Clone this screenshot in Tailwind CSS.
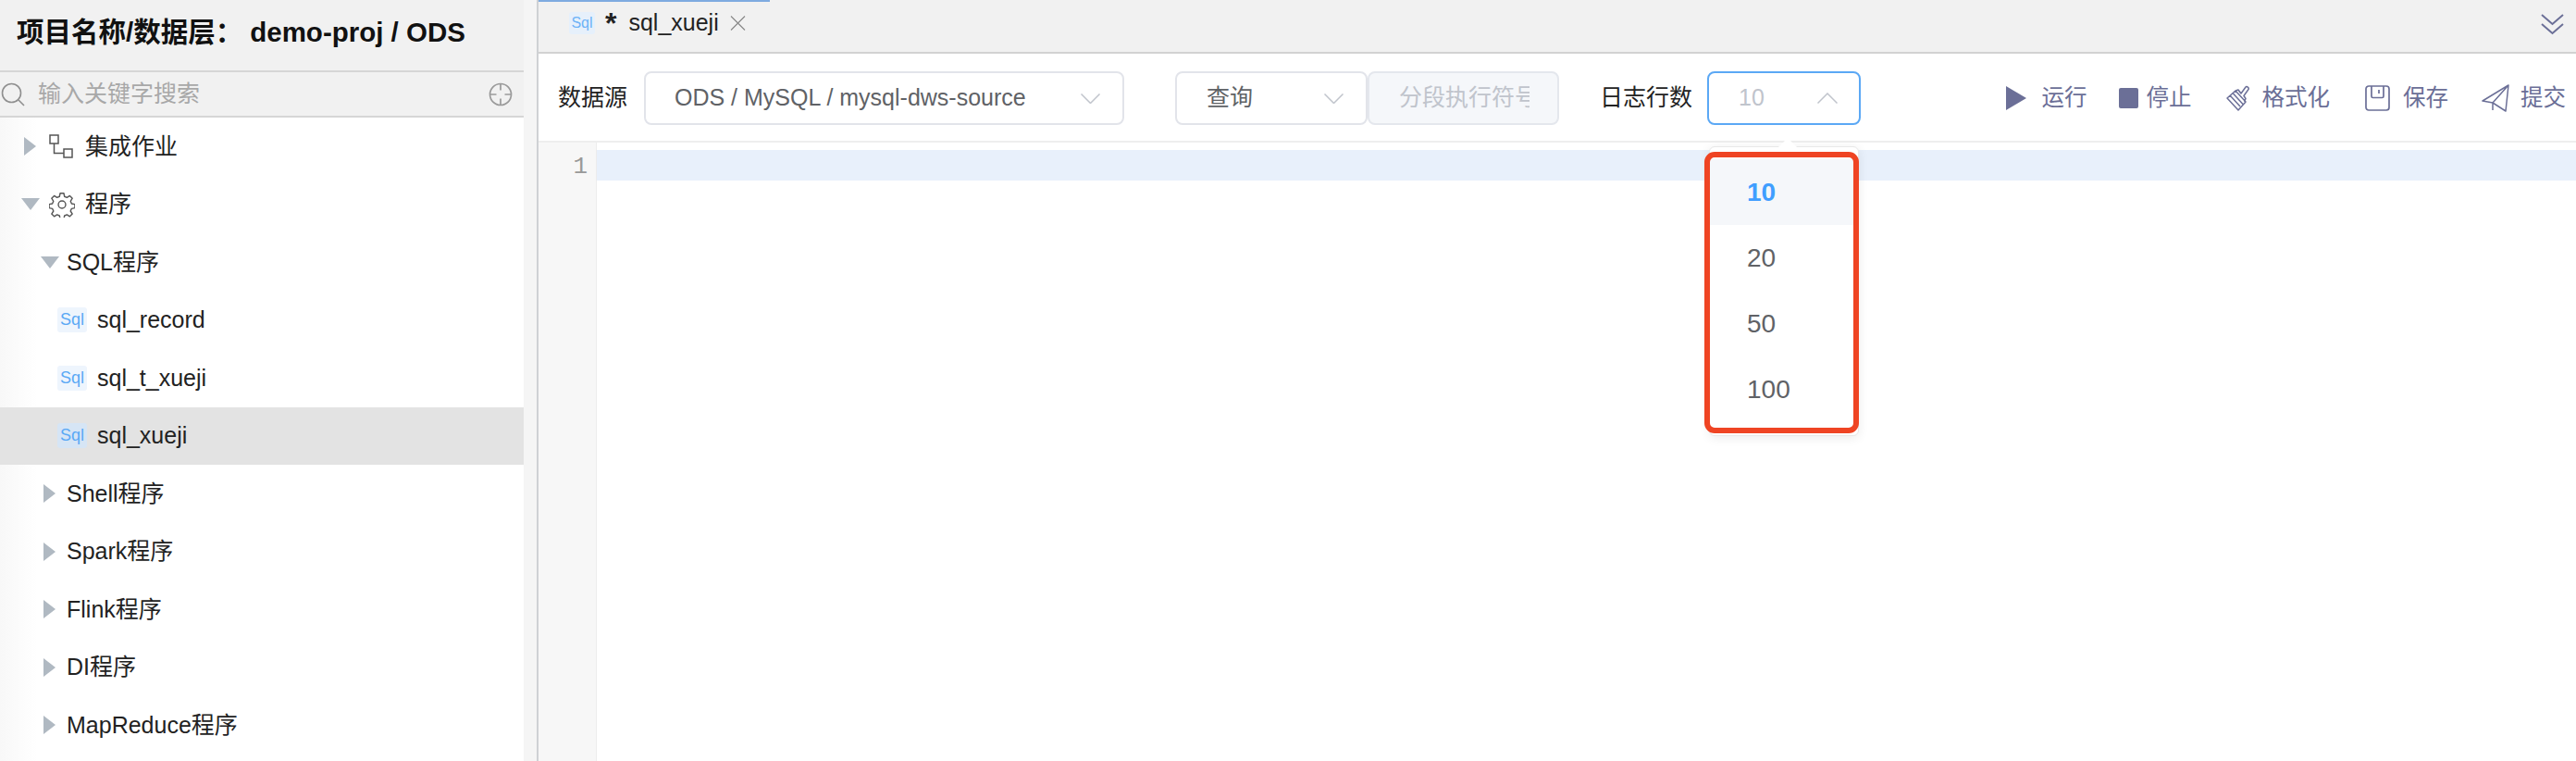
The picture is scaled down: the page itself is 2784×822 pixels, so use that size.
<!DOCTYPE html>
<html lang="zh">
<head>
<meta charset="utf-8">
<title>sql_xueji</title>
<script src="https://cdn.jsdelivr.net/npm/@tailwindcss/browser@4"></script>
</head>
<body class="m-0 bg-white">
<div class="flex h-[822px] w-[2784px] overflow-hidden bg-white font-['Liberation_Sans','Noto_Sans_CJK_SC',sans-serif] text-[25px] text-[#222]">

  <!-- Sidebar -->
  <aside class="flex h-full w-[566px] shrink-0 flex-col bg-white">
    <div class="flex h-[78px] shrink-0 items-center border-b-2 border-[#d6d6d6] bg-[#f1f1f1] pb-[6px] pl-[18px] text-[29.5px] font-bold text-[#111]">
      <span>项目名称/数据层：</span><span class="ml-[8px]">demo-proj / ODS</span>
    </div>
    <div class="flex h-[49px] shrink-0 items-center border-b-2 border-[#d6d6d6] bg-[#f1f1f1] pr-[12px] pl-[1px] text-[#a8a8a8]">
      <svg class="h-[26px] w-[26px] shrink-0" viewBox="0 0 26 26" fill="none" stroke="#8f8f8f" stroke-width="1.6"><circle cx="11.5" cy="11.5" r="10"/><path d="M19 19l6 6"/></svg>
      <span class="ml-[14px]">输入关键字搜索</span>
      <svg class="ml-auto h-[26px] w-[26px] shrink-0" viewBox="0 0 26 26" fill="none" stroke="#9a9a9a" stroke-width="1.7"><circle cx="13" cy="13" r="11.5"/><path d="M13 1.5v7M13 17.5v7M1.5 13h7M17.5 13h7"/></svg>
    </div>
    <nav class="flex flex-1 flex-col bg-linear-to-r from-[#f8f8f8] to-white to-[40px]">
      <div class="flex h-[62.5px] items-center pl-[26px]">
        <svg class="h-[20px] w-[13px] shrink-0" viewBox="0 0 13 20"><path d="M0 0l13 10L0 20z" fill="#b0b9c2"/></svg>
        <svg class="ml-[14px] h-[26px] w-[26px] shrink-0" viewBox="0 0 26 26" fill="none" stroke="#555" stroke-width="1.5"><rect x="1" y="1" width="9" height="9"/><rect x="16" y="16" width="9" height="9"/><path d="M5.5 10v10.5H16"/></svg>
        <span class="ml-[13px]">集成作业</span>
      </div>
      <div class="flex h-[62.5px] items-center pl-[23px]">
        <svg class="h-[13px] w-[20px] shrink-0" viewBox="0 0 20 13"><path d="M0 0h20L10 13z" fill="#b0b9c2"/></svg>
        <svg class="ml-[10px] h-[28px] w-[28px] shrink-0" viewBox="0 0 24 24" fill="none" stroke="#555" stroke-width="1.2" stroke-linejoin="round"><circle cx="12" cy="12" r="3.4"/><path d="M10.3 1.5h3.4l.6 3 2.3 1 2.6-1.7 2.4 2.4-1.7 2.6 1 2.3 3 .6v3.4l-3 .6-1 2.3 1.7 2.6-2.4 2.4-2.6-1.7-2.3 1-.6 3h-3.4l-.6-3-2.3-1-2.6 1.7-2.4-2.4 1.7-2.6-1-2.3-3-.6v-3.400l3-.6 1-2.3-1.7-2.6 2.4-2.4 2.6 1.7 2.3-1z"/></svg>
        <span class="ml-[11px]">程序</span>
      </div>
      <div class="flex h-[62.5px] items-center pl-[44px]">
        <svg class="h-[13px] w-[20px] shrink-0" viewBox="0 0 20 13"><path d="M0 0h20L10 13z" fill="#b0b9c2"/></svg>
        <span class="ml-[8px]">SQL程序</span>
      </div>
      <div class="flex h-[62.5px] items-center pl-[62px]">
        <span class="flex h-[27px] w-[32px] shrink-0 items-center justify-center rounded-[3px] bg-[#eef5fd] text-[18px] text-[#5aa9f5]">Sql</span>
        <span class="ml-[11px]">sql_record</span>
      </div>
      <div class="flex h-[62.5px] items-center pl-[62px]">
        <span class="flex h-[27px] w-[32px] shrink-0 items-center justify-center rounded-[3px] bg-[#eef5fd] text-[18px] text-[#5aa9f5]">Sql</span>
        <span class="ml-[11px]">sql_t_xueji</span>
      </div>
      <div class="flex h-[62.5px] items-center bg-[#e3e3e3] pl-[62px]">
        <span class="flex h-[27px] w-[32px] shrink-0 items-center justify-center rounded-[3px] bg-[#d6e5f5] text-[18px] text-[#5aa9f5]">Sql</span>
        <span class="ml-[11px]">sql_xueji</span>
      </div>
      <div class="flex h-[62.5px] items-center pl-[47px]">
        <svg class="h-[20px] w-[13px] shrink-0" viewBox="0 0 13 20"><path d="M0 0l13 10L0 20z" fill="#b0b9c2"/></svg>
        <span class="ml-[12px]">Shell程序</span>
      </div>
      <div class="flex h-[62.5px] items-center pl-[47px]">
        <svg class="h-[20px] w-[13px] shrink-0" viewBox="0 0 13 20"><path d="M0 0l13 10L0 20z" fill="#b0b9c2"/></svg>
        <span class="ml-[12px]">Spark程序</span>
      </div>
      <div class="flex h-[62.5px] items-center pl-[47px]">
        <svg class="h-[20px] w-[13px] shrink-0" viewBox="0 0 13 20"><path d="M0 0l13 10L0 20z" fill="#b0b9c2"/></svg>
        <span class="ml-[12px]">Flink程序</span>
      </div>
      <div class="flex h-[62.5px] items-center pl-[47px]">
        <svg class="h-[20px] w-[13px] shrink-0" viewBox="0 0 13 20"><path d="M0 0l13 10L0 20z" fill="#b0b9c2"/></svg>
        <span class="ml-[12px]">DI程序</span>
      </div>
      <div class="flex h-[62.5px] items-center pl-[47px]">
        <svg class="h-[20px] w-[13px] shrink-0" viewBox="0 0 13 20"><path d="M0 0l13 10L0 20z" fill="#b0b9c2"/></svg>
        <span class="ml-[12px]">MapReduce程序</span>
      </div>
    </nav>
  </aside>

  <!-- Splitter -->
  <div class="h-full w-[16px] shrink-0 border-r-2 border-[#cfd1d4] bg-[#f5f5f5]"></div>

  <!-- Main -->
  <main class="flex h-full min-w-0 flex-1 flex-col">
    <!-- Tabs -->
    <div class="flex h-[58px] shrink-0 items-start border-b-2 border-[#d2d2d2] bg-[#f1f1f1]">
      <div class="flex h-[56px] w-[250px] items-center border-t-2 border-[#7fabe0] pb-[8px] pl-[33px]">
        <span class="flex h-[24px] w-[28px] shrink-0 items-center justify-center rounded-[3px] bg-[#e6f0fb] text-[16px] text-[#6db3f7]">Sql</span>
        <span class="ml-[11px] text-[32px] leading-none font-bold">*</span>
        <span class="ml-[13px]">sql_xueji</span>
        <svg class="ml-[12px] h-[16px] w-[17px] shrink-0" viewBox="0 0 17 16" fill="none" stroke="#8a8a8a" stroke-width="1.2"><path d="M1 0.5l15 15M16 0.5l-15 15"/></svg>
      </div>
      <svg class="mt-[15px] mr-[13px] ml-auto h-[23px] w-[25px] shrink-0" viewBox="0 0 25 23" fill="none" stroke="#6b6f97" stroke-width="2"><path d="M1 1l11.500 10L24 1M1 11l11.500 10L24 11"/></svg>
    </div>

    <!-- Toolbar -->
    <div class="flex h-[96px] shrink-0 items-center border-b-2 border-[#eeeeee] pt-[2px] pl-[21px]">
      <span class="w-[75px] shrink-0 whitespace-nowrap">数据源</span>
      <div class="ml-[18px] flex h-[58px] w-[519px] shrink-0 items-center rounded-[8px] border-2 border-[#e2e4ea] pr-[24px] pl-[31px] text-[#606266]">
        <span>ODS / MySQL / mysql-dws-source</span>
        <svg class="ml-auto h-[11px] w-[21px] shrink-0" viewBox="0 0 21 11" fill="none" stroke="#c0c4cc" stroke-width="1.500"><path d="M0.500 0.500l10 10 10-10"/></svg>
      </div>
      <div class="ml-[55px] flex h-[58px] w-[208px] shrink-0 items-center rounded-[8px] border-2 border-[#e2e4ea] pr-[24px] pl-[32px] text-[#606266]">
        <span>查询</span>
        <svg class="ml-auto h-[11px] w-[21px] shrink-0" viewBox="0 0 21 11" fill="none" stroke="#c0c4cc" stroke-width="1.500"><path d="M0.500 0.500l10 10 10-10"/></svg>
      </div>
      <div class="flex h-[58px] w-[207px] shrink-0 items-center overflow-hidden rounded-[8px] border-2 border-[#e4e7ed] bg-[#f5f7fa] pl-[32px] text-[#c0c4cc]">
        <span class="w-[141px] shrink-0 overflow-hidden whitespace-nowrap">分段执行符号</span>
      </div>
      <span class="ml-[44px] w-[98px] shrink-0 whitespace-nowrap">日志行数</span>
      <div class="relative ml-[18px] flex h-[58px] w-[166px] shrink-0 items-center rounded-[8px] border-2 border-[#5ba8f5] pr-[23px] pl-[32px] text-[#c0c4cc]">
        <span>10</span>
        <svg class="ml-auto h-[12px] w-[22px] shrink-0" viewBox="0 0 22 12" fill="none" stroke="#c0c4cc" stroke-width="1.500"><path d="M0.500 11.500l10.500-10.500 10.500 10.500"/></svg>

        <!-- Dropdown -->
        <div class="absolute top-[79px] left-0 z-10 w-[162px]">
          <div class="rounded-[6px] border border-[#e8e8e8] bg-white pt-[13px] pb-[14px] text-[28px] text-[#606266] shadow-[0_2px_12px_rgba(0,0,0,0.08)]">
            <div class="flex h-[71px] items-center bg-[#f5f7fa] pl-[40px] font-bold text-[#409eff]">10</div>
            <div class="flex h-[71px] items-center pl-[40px]">20</div>
            <div class="flex h-[71px] items-center pl-[40px]">50</div>
            <div class="flex h-[71px] items-center pl-[40px]">100</div>
          </div>
          <div class="absolute -top-[9px] left-[74px] h-0 w-0 border-x-[11px] border-b-[11px] border-x-transparent border-b-white"></div>
          <div class="absolute top-[6px] -left-[5px] h-[304px] w-[167px] rounded-[11px] border-[6px] border-[#ef4423]"></div>
        </div>
      </div>

      <div class="mr-[11px] ml-auto flex shrink-0 items-center text-[24.5px] whitespace-nowrap text-[#6b6f97]">
        <svg class="h-[26px] w-[22px] shrink-0" viewBox="0 0 22 26"><path d="M0 0l22 13L0 26z" fill="#6b6f97"/></svg>
        <span class="ml-[17px]">运行</span>
        <span class="ml-[34px] h-[22px] w-[21px] shrink-0 rounded-[2px] bg-[#6b6f97]"></span>
        <span class="ml-[9px]">停止</span>
        <svg class="ml-[37px] h-[28px] w-[27px] shrink-0" viewBox="0 0 27 28" fill="none" stroke="#6b6f97" stroke-width="1.500" stroke-linejoin="round"><path d="M1 14l9-8 11 12-8 9zM4 11l11 12M7 8.500l11 12M10 6l3-1 3 4 5-7c1-1.500 4 1 3 2.500l-5 7 2 3-1.500 3.500"/></svg>
        <span class="ml-[12px]">格式化</span>
        <svg class="ml-[38px] h-[28px] w-[27px] shrink-0" viewBox="0 0 27 28" fill="none" stroke="#6b6f97" stroke-width="1.700"><rect x="1" y="1" width="25" height="26" rx="3"/><path d="M7 1v11c0 1 .5 1.500 1.500 1.500h10c1 0 1.500-.5 1.500-1.500V1M15 5v4"/></svg>
        <span class="ml-[14px]">保存</span>
        <svg class="ml-[36px] h-[30px] w-[30px] shrink-0" viewBox="0 0 30 30" fill="none" stroke="#6b6f97" stroke-width="1.500" stroke-linejoin="round"><path d="M29 1L1 18l11 2 14 9zM29 1L12 20v8"/></svg>
        <span class="ml-[12px]">提交</span>
      </div>
    </div>

    <!-- Editor -->
    <div class="flex min-h-0 flex-1">
      <div class="w-[63px] shrink-0 border-r border-[#ececec] bg-[#f7f7f7] pt-[10px] pr-[9px] text-right font-['Liberation_Mono',monospace] text-[26px] leading-[33px] text-[#999]">1</div>
      <div class="min-w-0 flex-1 pt-[8px]">
        <div class="h-[33px] bg-[#e8f0fb]"></div>
      </div>
    </div>
  </main>
</div>
</body>
</html>
